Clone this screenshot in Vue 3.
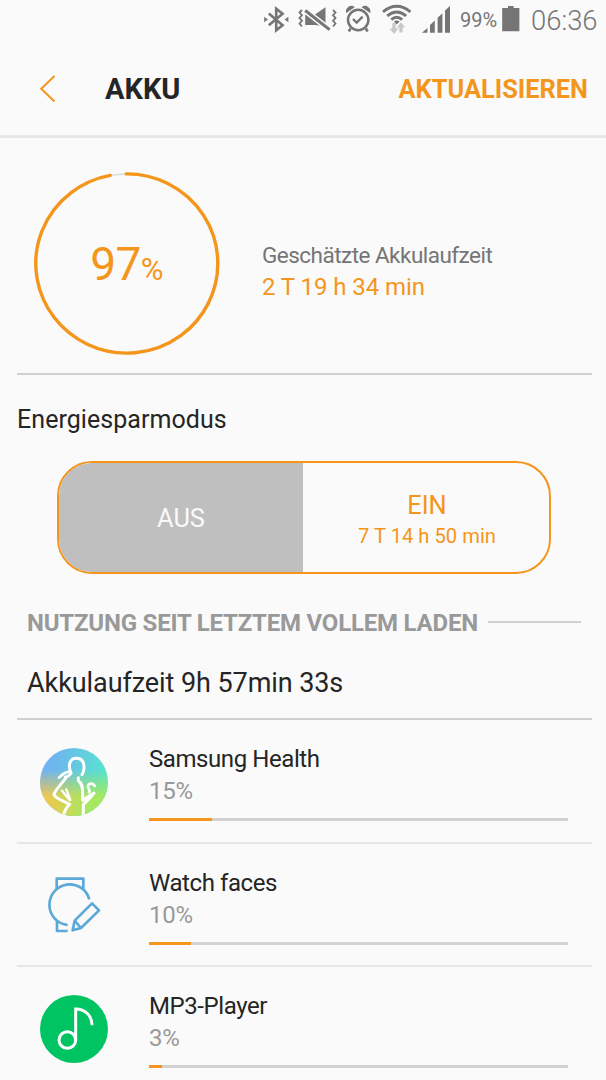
<script setup>
import { ref } from 'vue'

const charge = 97
const mode = ref('off')

const apps = [
  { id: 'health', name: 'Samsung Health', usage: 15 },
  { id: 'watch', name: 'Watch faces', usage: 10 },
  { id: 'music', name: 'MP3-Player', usage: 3 },
]
</script>

<template>
  <div class="screen">
    <div class="status-bar">
      <svg class="bluetooth" width="25" height="42" viewBox="0 0 25 42">
        <path
          d="M4.8 13.5 18.6 25.2 12.2 30.3V8.7L18.6 13.8 4.8 25.2"
          fill="none"
          stroke="#757575"
          stroke-width="2.6"
        />
        <path d="M.2 16.8 4 19.5.2 22.2ZM24.4 16.8 20.6 19.5 24.4 22.2Z" fill="#757575" />
      </svg>
      <svg class="mute" width="39" height="42" viewBox="0 0 39 42">
        <path d="M7.2 14.6H17L27.5 7.3V26.5L17 25H7.2Z" fill="#757575" />
        <path d="M8 8.9 34 29.2" stroke="#fafafa" stroke-width="2.4" />
        <path d="M7.2 10.6 31.5 29.8" stroke="#757575" stroke-width="3.2" />
        <path d="M7.2 13.4 30 31.4" stroke="#fafafa" stroke-width="1.4" />
        <path
          d="M4 10 1.5 12.5 4 15.2 1.5 18 4 20.8 1.5 23.5 4 26.5M35 10 37.5 12.5 35 15.2 37.5 18 35 20.8 37.5 23.5 35 26.5"
          fill="none"
          stroke="#757575"
          stroke-width="1.8"
        />
      </svg>
      <svg class="alarm" width="25" height="42" viewBox="0 0 25 42">
        <g fill="none" stroke="#757575">
          <circle cx="12.2" cy="20" r="10.2" stroke-width="2.5" />
          <path d="M7 19 10.7 22.6 16.6 16.6" stroke-width="2.4" />
          <path d="M4.5 28.5 2.8 31.5M19.9 28.5 21.6 31.5" stroke-width="2.6" />
        </g>
        <path d="M.3 13A5.3 5.3 0 0 1 8.7 7.2ZM24.1 13A5.3 5.3 0 0 0 15.7 7.2Z" fill="#757575" />
      </svg>
      <svg class="wifi" width="32" height="42" viewBox="0 0 32 42">
        <g fill="none" stroke="#757575" stroke-width="2.9">
          <path d="M3 11.8Q16.7 .8 30.4 11.8" />
          <path d="M7.2 15.8Q16.7 8 26.2 15.8" />
          <path d="M11.3 19.6Q16.7 15 22.1 19.6" />
        </g>
        <path d="M13.8 21.6Q16.7 19.2 19.6 21.6L16.7 24.4Z" fill="#757575" />
        <path
          d="M12.3 23H15.7V28.5H18.5L14 34 9.5 28.5H12.3ZM19.3 32.5V27.5H16.8L21 22.3 25.2 27.5H22.7V32.5Z"
          fill="#c8c8c8"
        />
      </svg>
      <svg class="signal" width="29" height="42" viewBox="0 0 29 42">
        <path
          d="M0 32.8 5.4 28V32.8ZM8 25 12.8 20.4V32.8H8ZM15.6 17.8 20.4 13.2V32.8H15.6ZM23 10.6 28 6V32.8H23Z"
          fill="#757575"
        />
      </svg>
      <span class="battery-text">99%</span>
      <svg class="battery" width="18" height="42" viewBox="0 0 18 42">
        <path d="M.2 8H6V6H11.6V8H17.4V31.3H.2Z" fill="#757575" />
      </svg>
      <span class="clock">06:36</span>
    </div>

    <header class="header">
      <svg class="back" width="18" height="28" viewBox="0 0 18 28">
        <path d="M15.5 1 2.2 13.7 15.5 26.5" fill="none" stroke="#f4951c" stroke-width="2" />
      </svg>
      <h1 class="title">AKKU</h1>
      <span class="refresh">AKTUALISIEREN</span>
    </header>

    <section class="summary">
      <div class="gauge">
        <svg class="ring" width="186" height="184" viewBox="0 0 186 184">
          <ellipse cx="92.9" cy="91.5" rx="91" ry="89.6" fill="none" stroke="#dcdcdc" stroke-width="1.5" />
          <path
            d="M92.2 1.9A91 89.6 0 1 1 76.2 3.4"
            fill="none"
            stroke="#f4951c"
            stroke-width="3.4"
            stroke-linecap="round"
          />
        </svg>
        <div class="gauge-value">{{ charge }}<small>%</small></div>
      </div>
      <div class="estimate">
        <div class="estimate-label">Geschätzte Akkulaufzeit</div>
        <div class="estimate-time">2 T 19 h 34 min</div>
      </div>
    </section>

    <section class="saver">
      <h2 class="saver-title">Energiesparmodus</h2>
      <div class="toggle">
        <div class="option" :class="{ selected: mode === 'off' }" @click="mode = 'off'">
          <span class="option-name">AUS</span>
        </div>
        <div class="option" :class="{ selected: mode === 'on' }" @click="mode = 'on'">
          <span class="option-name">EIN</span>
          <span class="option-time">7 T 14 h 50 min</span>
        </div>
      </div>
    </section>

    <div class="section-head">
      <span class="section-title">NUTZUNG SEIT LETZTEM VOLLEM LADEN</span>
      <span class="section-line"></span>
    </div>
    <div class="runtime">Akkulaufzeit 9h 57min 33s</div>

    <div class="apps">
      <div v-for="app in apps" :key="app.id" class="app">
        <svg v-if="app.id === 'health'" class="app-icon" viewBox="31 38 204 204">
          <defs>
            <linearGradient id="sky" x1="0" y1="0" x2="1" y2="0.15">
              <stop offset="0.2" stop-color="#6fb4f0" />
              <stop offset="1" stop-color="#58e3cf" />
            </linearGradient>
            <linearGradient id="meadow" x1="0" y1="0" x2="1" y2="0">
              <stop offset="0.1" stop-color="#f0c850" />
              <stop offset="0.7" stop-color="#a5e860" />
            </linearGradient>
            <linearGradient id="fade" x1="0" y1="0" x2="0" y2="1">
              <stop offset="0.32" stop-color="#000" />
              <stop offset="0.72" stop-color="#fff" />
            </linearGradient>
            <mask id="ground">
              <rect x="31" y="38" width="204" height="204" fill="url(#fade)" />
            </mask>
            <clipPath id="disc">
              <circle cx="133" cy="140" r="102" />
            </clipPath>
          </defs>
          <circle cx="133" cy="140" r="102" fill="url(#sky)" />
          <circle cx="133" cy="140" r="102" fill="url(#meadow)" mask="url(#ground)" />
          <g
            clip-path="url(#disc)"
            fill="none"
            stroke="#fff"
            stroke-width="9"
            stroke-linecap="round"
            stroke-linejoin="round"
          >
            <path d="M124 113C113 88 122 69 140 69C158 69 164 82 163 98C163 106 161 113 157 118" />
            <path d="M122 109C108 109 98 117 88 127M124 113C121 121 112 124 106 125" stroke-width="8" />
            <path d="M108 129C99 140 78 164 73 176C72 183 85 190 94 194L120 207C110 216 103 230 100 246" />
            <path d="M146 127V136C157 143 159 155 159 178V195L193 173C184 184 173 197 161 207V246" />
            <path d="M97 166 120 194M110 162 122 194" stroke-width="7" />
            <path d="M178 171C184 164 172 159 175 151C178 143 190 142 195 152" stroke-width="8" />
          </g>
        </svg>
        <svg v-else-if="app.id === 'watch'" class="app-icon" viewBox="31 34 204 204">
          <g fill="none" stroke="#5ca9d8" stroke-width="8" stroke-linejoin="round">
            <path d="M81 87V57H161V87" />
            <path d="M114 196A61 61 0 1 1 179 119" />
            <path d="M82 184V214H114" />
            <path d="M187 131 208 152 154 205 129 212 135 183Z" />
            <path d="M135 183 154 205" />
          </g>
        </svg>
        <svg v-else class="app-icon" viewBox="31 29 204 204">
          <circle cx="133" cy="131" r="102" fill="#00c462" />
          <g fill="none" stroke="#fff" stroke-width="9">
            <circle cx="113" cy="164" r="25" />
            <path d="M138 166V71C166 71 187 91 187 120" />
          </g>
        </svg>
        <div class="app-info">
          <div class="app-name">{{ app.name }}</div>
          <div class="app-usage">{{ app.usage }}%</div>
          <div class="bar">
            <div class="bar-fill" :style="{ width: app.usage + '%' }"></div>
          </div>
        </div>
      </div>
    </div>
  </div>
</template>

<style>
body {
  background-color: #fafafa;
  overflow: hidden;
}
</style>

<style scoped>
.screen {
  width: 606px;
  height: 1080px;
  overflow: hidden;
  background-color: #fafafa;
  color: #252525;
  font-family: Roboto, sans-serif;
  white-space: nowrap;
}

.status-bar {
  display: flex;
  height: 42px;
  padding-left: 264px;
  color: #757575;
  line-height: 40px;
}

.status-bar svg {
  flex: none;
}

.mute,
.alarm,
.wifi {
  margin-left: 9px;
}

.signal {
  margin-left: 10px;
}

.battery-text {
  width: 42px;
  margin-left: 9px;
  font-size: 20px;
}

.clock {
  margin-left: 11px;
  font-size: 27.4px;
  font-weight: 300;
  line-height: 42px;
}

.header {
  display: flex;
  align-items: center;
  box-sizing: border-box;
  height: 96px;
  padding: 0 18px 0 39px;
  border-bottom: 3px solid #e7e7e7;
}

.title {
  margin: 0 0 0 48px;
  font-size: 29px;
  font-weight: 700;
}

.refresh {
  margin-left: auto;
  color: #f4951c;
  font-size: 25.4px;
  font-weight: 700;
}

.summary {
  display: flex;
  box-sizing: border-box;
  height: 237px;
  margin: 0 14px 0 17px;
  padding: 34px 0 0 17px;
  border-bottom: 2px solid #d0d0d0;
}

.gauge {
  display: grid;
  width: 186px;
  height: 184px;
}

.ring,
.gauge-value {
  grid-area: 1 / 1;
}

.gauge-value {
  place-self: center;
  padding: 5px 1px 0 0;
  color: #f4951c;
  font-size: 46px;
  letter-spacing: -0.7px;
  line-height: 54px;
}

.gauge-value small {
  font-size: 31px;
}

.estimate {
  margin: 68px 0 0 42px;
}

.estimate-label {
  color: #757575;
  font-size: 22.5px;
  letter-spacing: -0.52px;
  line-height: 31px;
}

.estimate-time {
  color: #f4951c;
  font-size: 24px;
  letter-spacing: -0.06px;
  line-height: 32px;
}

.saver {
  height: 225px;
}

.saver-title {
  margin: 0;
  padding: 29px 0 25px 17px;
  font-size: 25px;
  font-weight: 400;
  letter-spacing: 0.06px;
  line-height: 32px;
}

.toggle {
  display: flex;
  box-sizing: border-box;
  width: 494px;
  height: 113px;
  margin-left: 57px;
  border: 2px solid #f4951c;
  border-radius: 35px;
  overflow: hidden;
}

.option {
  display: flex;
  flex: 1;
  flex-direction: column;
  align-items: center;
  justify-content: center;
  padding: 5px 0 0 2px;
  color: #f4951c;
}

.option.selected {
  padding: 0;
  background-color: #bfbfbf;
  color: #fafafa;
}

.option-name {
  font-size: 25.4px;
  line-height: 32px;
}

.option-time {
  font-size: 20.2px;
  line-height: 31px;
}

.section-head {
  display: flex;
  align-items: center;
  height: 46px;
  padding: 0 25px 0 27px;
}

.section-title {
  color: #999;
  font-size: 24px;
  font-weight: 700;
  letter-spacing: -0.21px;
}

.section-line {
  flex: 1;
  height: 2px;
  margin: 0 0 3px 10px;
  background-color: #d0d0d0;
}

.runtime {
  box-sizing: border-box;
  height: 74px;
  margin: 0 14px 0 17px;
  padding: 21px 0 0 10px;
  border-bottom: 2px solid #d0d0d0;
  font-size: 27px;
  letter-spacing: -0.08px;
  line-height: 32px;
}

.app {
  display: flex;
  box-sizing: border-box;
  height: 123.5px;
  margin: 0 14px 0 17px;
  padding: 23px 24px 0 23px;
  border-bottom: 2px solid #e7e7e7;
}

.app-icon {
  flex: none;
  width: 68px;
  height: 68px;
  margin-top: 4.5px;
}

.app-info {
  flex: 1;
  margin-left: 41px;
}

.app-name {
  font-size: 24px;
  letter-spacing: -0.42px;
  line-height: 32px;
}

.app-usage {
  color: #999;
  font-size: 24px;
  letter-spacing: -0.3px;
  line-height: 32px;
}

.bar {
  height: 3px;
  margin-top: 11px;
  background-color: #d2d2d2;
}

.bar-fill {
  height: 100%;
  background-color: #f4951c;
}
</style>
